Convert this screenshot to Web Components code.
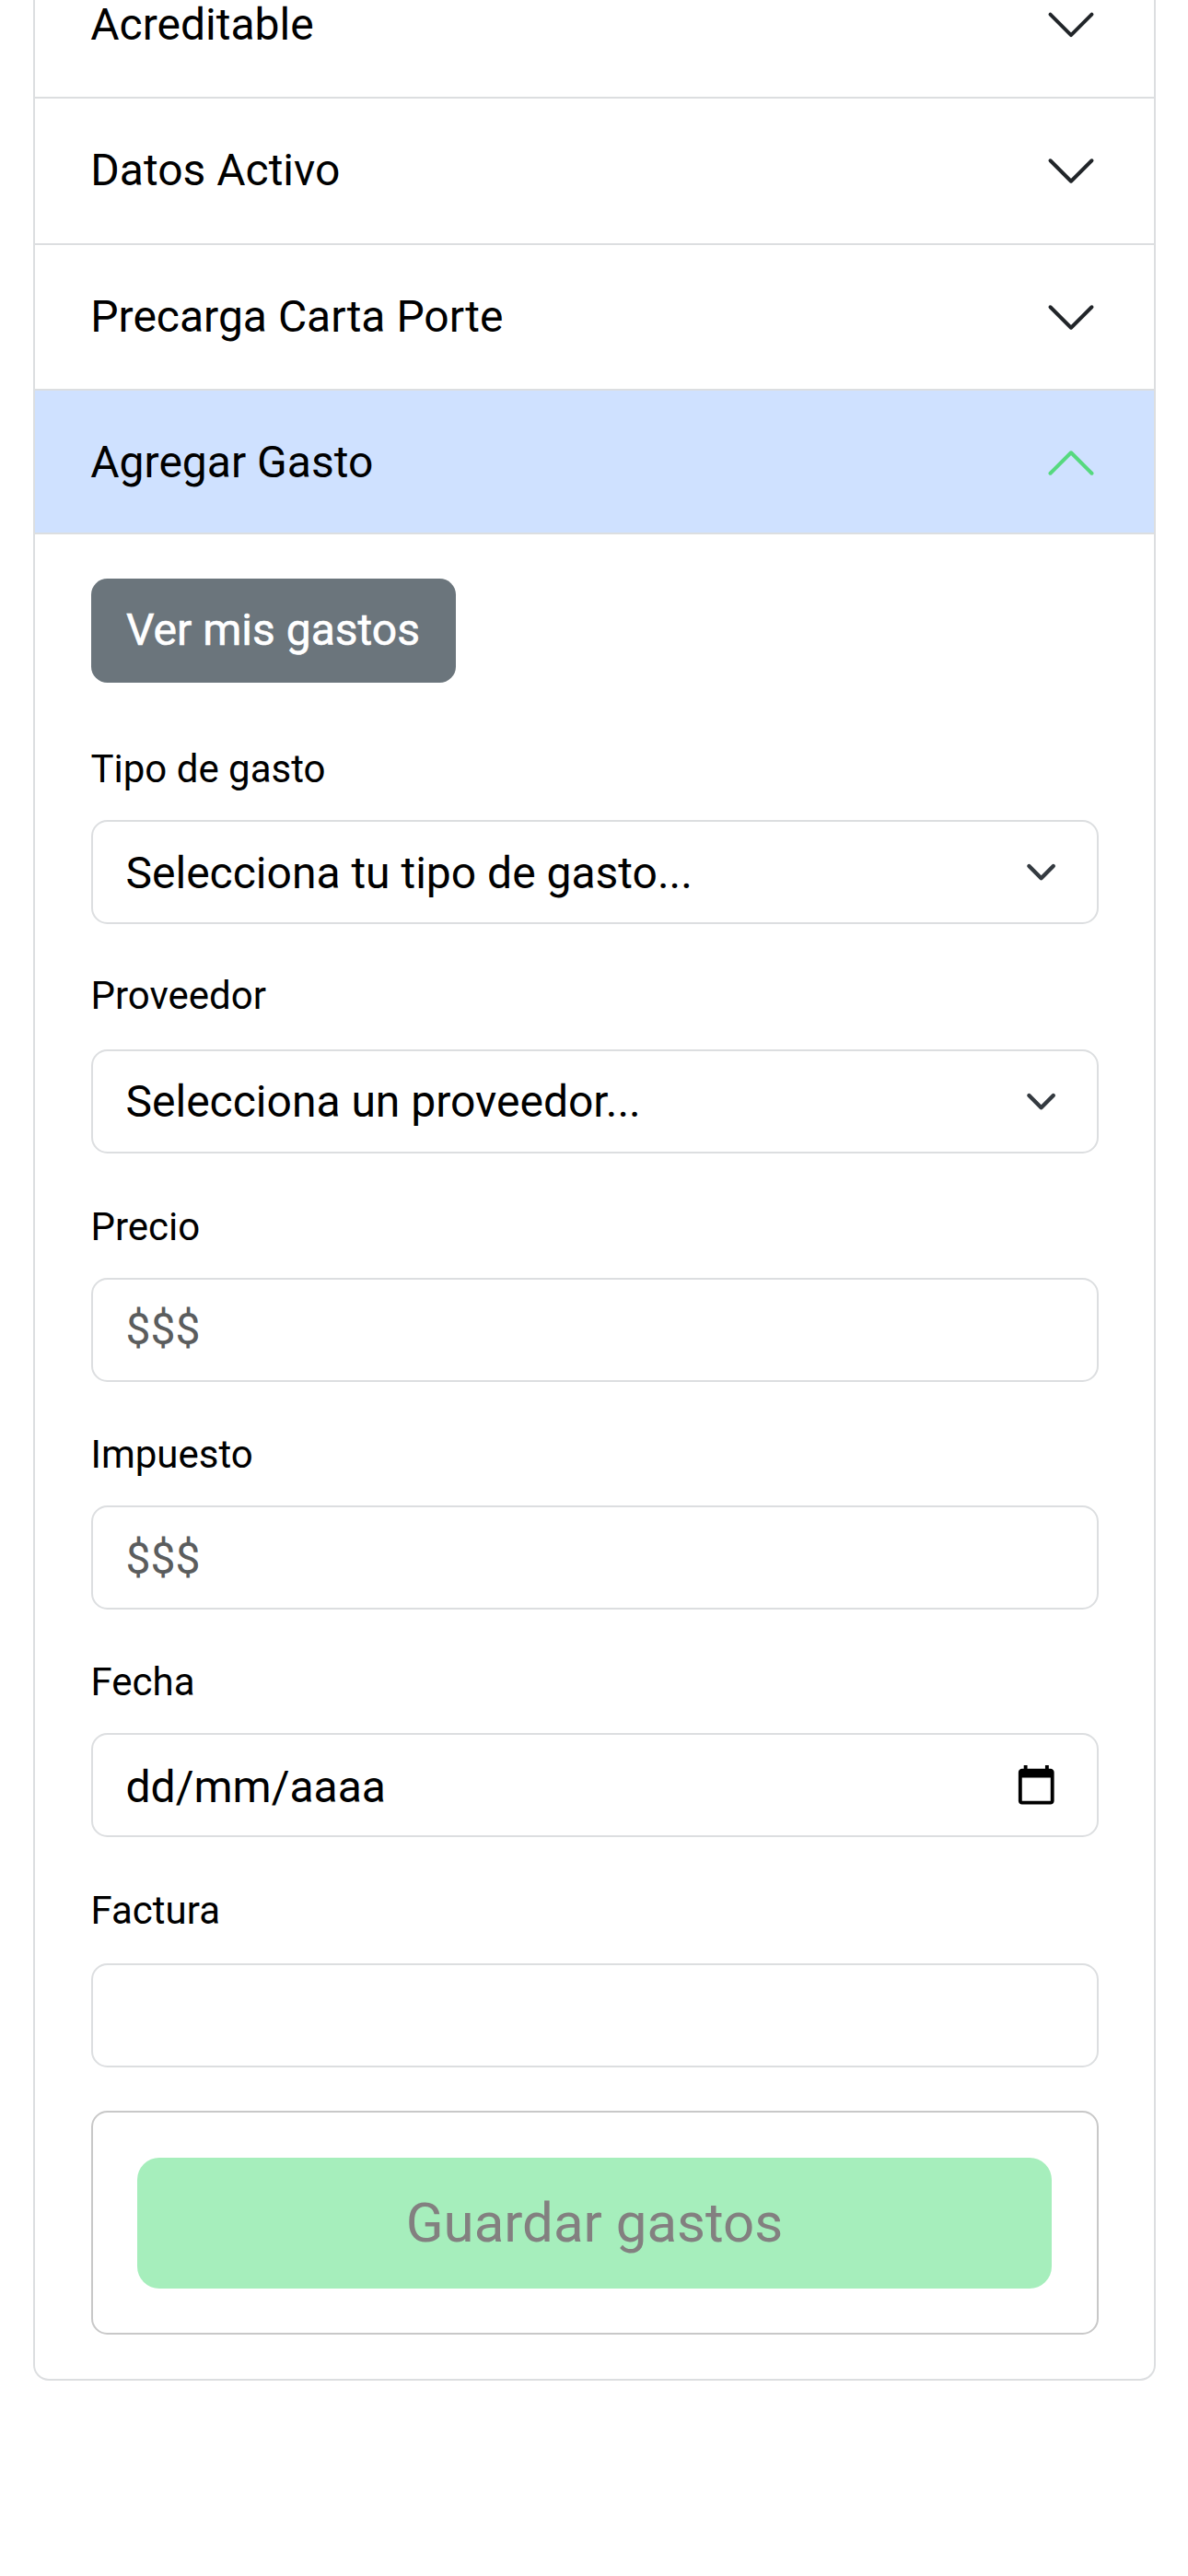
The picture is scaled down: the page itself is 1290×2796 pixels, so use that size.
<!DOCTYPE html>
<html lang="es">
<head>
<meta charset="utf-8">
<title>Agregar Gasto</title>
<style>
  html, body { margin: 0; background: #fff; }
  body {
    font-family: Roboto, "Liberation Sans", sans-serif;
    font-size: 48px;
    color: #000;
    overflow: hidden;
    min-height: 2796px;
    --line: #dcdee0;
  }
</style>
</head>
<body>
<gasto-accordion>
  <accordion-row style="--h:158px; --icon:.8px">Acreditable</accordion-row>
  <accordion-row style="--h:157px; --nudge:2px; --icon:-.5px">Datos Activo</accordion-row>
  <accordion-row style="--h:156px; --nudge:2px; --icon:.5px">Precarga Carta Porte</accordion-row>
  <accordion-row open style="--h:154px; --icon:1.5px">Agregar Gasto</accordion-row>
  <gasto-form>
    <link-button>Ver mis gastos</link-button>
    <form-field label="Tipo de gasto" kind="select" style="--mt:64px; --gap:25px; --down:1px">Selecciona tu tipo de gasto...</form-field>
    <form-field label="Proveedor" kind="select" style="--mt:48px; --gap:28px">Selecciona un proveedor...</form-field>
    <form-field label="Precio" kind="text" style="--mt:50px; --gap:25px; --up:2px">$$$</form-field>
    <form-field label="Impuesto" kind="text" style="--mt:49px; --gap:25px; --down:1px">$$$</form-field>
    <form-field label="Fecha" kind="date" style="--mt:49px; --gap:25px; --down:3px">dd/mm/aaaa</form-field>
    <form-field label="Factura" kind="text" style="--mt:50px; --gap:27px"></form-field>
    <save-box>Guardar gastos</save-box>
  </gasto-form>
</gasto-accordion>

<script>
const define = (name, render) => customElements.define(name, class extends HTMLElement {
  connectedCallback() {
    if (this.shadowRoot) return;
    this.attachShadow({ mode: 'open' }).innerHTML = render(this);
  }
});

define('gasto-accordion', () => `
  <style>
    :host {
      display: flex; flex-direction: column; box-sizing: border-box;
      width: 1219px; margin: -53px 0 0 36px;
      border: 2px solid var(--line); border-top: 0;
      border-radius: 0 0 17px 17px;
    }
  </style>
  <slot></slot>`);

define('accordion-row', () => `
  <style>
    :host {
      display: flex; align-items: center; justify-content: space-between;
      height: var(--h); padding: 0 60.3px 0 60.3px;
      border-bottom: 2px solid var(--line);
      stroke: #212529;
    }
    :host([open]) { background: #cfe1ff; stroke: #56d97f; }
    span { padding-bottom: var(--nudge, 0); white-space: nowrap; }
    svg { width: 60px; height: 60px; display: block; transform: translateY(var(--icon)); }
    :host([open]) svg { transform: translateY(var(--icon)) rotate(180deg); }
  </style>
  <span><slot></slot></span>
  <svg viewBox="0 0 16 16" fill="none" stroke-width="1.06" stroke-linecap="round" stroke-linejoin="round"><path d="m2 5 6 6 6-6"/></svg>`);

define('gasto-form', () => `
  <style>
    :host { display: flex; flex-direction: column; padding: 48px 60px 48px 60.5px; }
  </style>
  <slot></slot>`);

define('link-button', () => `
  <style>
    :host { display: flex; align-self: flex-start; }
    button {
      all: unset; box-sizing: border-box; width: 396px; height: 113px;
      display: flex; align-items: center; justify-content: center;
      padding-bottom: 2px; border-radius: 17.6px;
      background: #6b757c; color: #fff; white-space: nowrap;
      -webkit-text-stroke: .6px #fff;
    }
  </style>
  <button><slot></slot></button>`);

const icons = {
  text: '',
  select: `<svg class="chevron" viewBox="0 0 16 16" fill="none" stroke="#343a40" stroke-width="2" stroke-linecap="round" stroke-linejoin="round"><path d="m2 5 6 6 6-6"/></svg>`,
  date: `<svg class="calendar" viewBox="0 0 24 24" fill="#000"><path d="M20 3h-1V1h-2v2H7V1H5v2H4c-1.1 0-2 .9-2 2v16c0 1.1.9 2 2 2h16c1.1 0 2-.9 2-2V5c0-1.1-.9-2-2-2zm0 18H4V8h16v13z"/></svg>`
};

define('form-field', el => `
  <style>
    :host { display: flex; flex-direction: column; gap: var(--gap); margin-top: var(--mt); }
    label { font-size: 42px; line-height: 60px; height: 60px; }
    .box {
      display: flex; align-items: center; justify-content: space-between;
      box-sizing: border-box; height: 113px; padding: 0 42.5px 0 36px;
      border: 2px solid var(--line); border-radius: 17.6px;
    }
    .value { padding: var(--down, 0) 0 var(--up, 0); white-space: nowrap; }
    .text { color: #5b5d5e; }
    svg { display: block; }
    .chevron { width: 35.2px; height: 35.2px; margin-right: .5px; }
    .calendar { width: 46.5px; height: 46.5px; }
  </style>
  <label>${el.getAttribute('label')}</label>
  <div class="box"><span class="value ${el.getAttribute('kind')}"><slot></slot></span>${icons[el.getAttribute('kind')]}</div>`);

define('save-box', () => `
  <style>
    :host {
      display: flex; margin-top: 47px; padding: 49px 49px 48px 48.5px;
      border: 2px solid #c8c8c8; border-radius: 17.6px;
    }
    button {
      all: unset; box-sizing: border-box; flex: 1; height: 142px; border-radius: 24px;
      display: flex; align-items: center; justify-content: center; padding-bottom: 2px;
      background: #a6eebc; color: #838080;
      font-size: 60px; white-space: nowrap;
    }
  </style>
  <button><slot></slot></button>`);
</script>
</body>
</html>
